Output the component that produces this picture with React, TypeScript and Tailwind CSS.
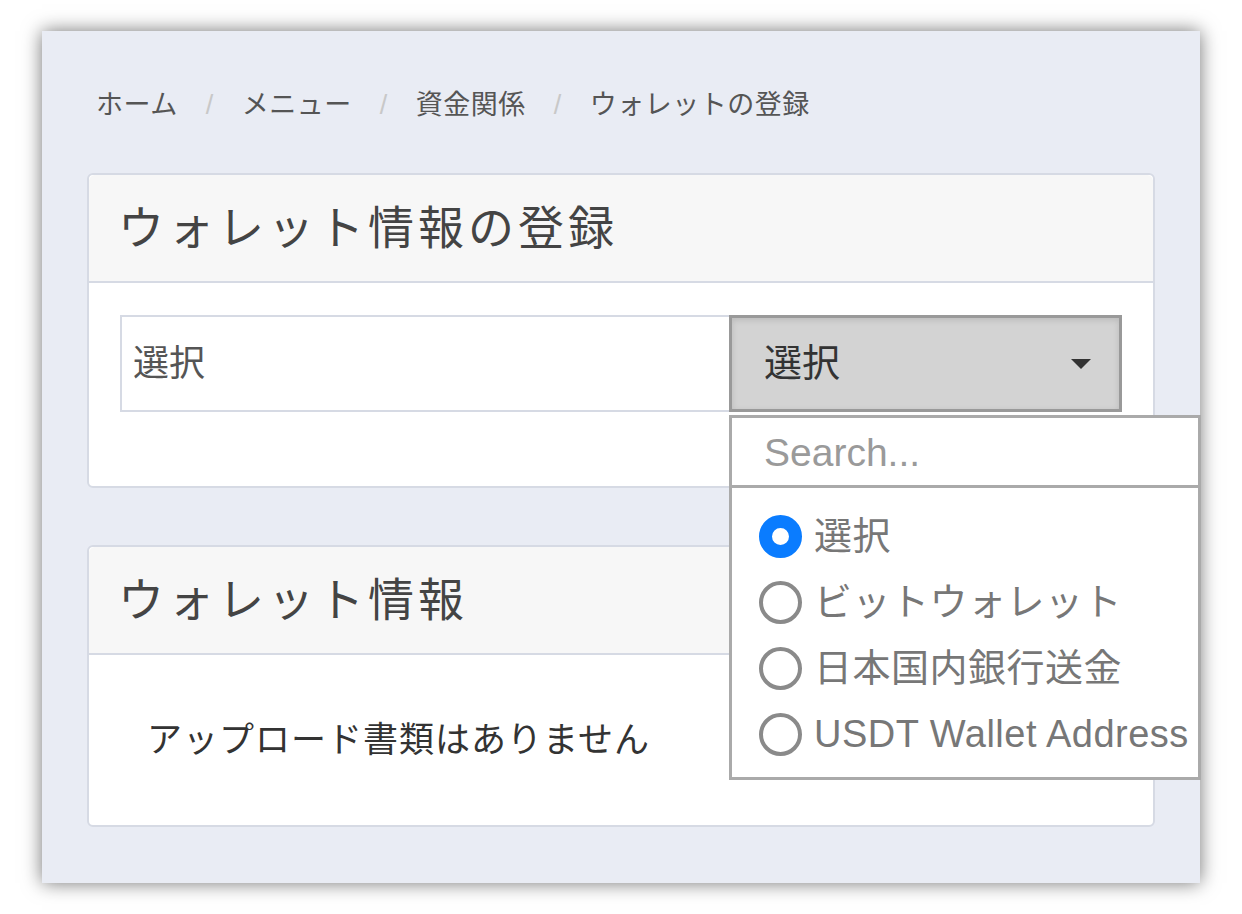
import React from 'react'

const jp = { fontFamily: '"Liberation Sans", "Noto Sans CJK JP", sans-serif' }

const crumbs = ['ホーム', 'メニュー', '資金関係', 'ウォレットの登録']

const options = [
  { label: '選択', checked: true },
  { label: 'ビットウォレット', checked: false },
  { label: '日本国内銀行送金', checked: false },
  { label: 'USDT Wallet Address', checked: false },
]

function Radio({ checked }: { checked: boolean }) {
  return checked ? (
    <span className="w-[43px] h-[43px] rounded-full border-[13px] border-[#0a7cff] bg-white shrink-0" />
  ) : (
    <span className="w-[43px] h-[43px] rounded-full border-[4px] border-[#8a8a8a] bg-white shrink-0" />
  )
}

function CardHeader({ title }: { title: string }) {
  return (
    <div className="h-[108px] flex items-center px-[29px] bg-[#f7f7f7] border-b-2 border-[#d6dae4] rounded-t-[6px]">
      <h2 className="text-[46px] leading-none text-[#444] tracking-[4px]">{title}</h2>
    </div>
  )
}

export default function App() {
  return (
    <div className="w-[1242px] h-[914px] bg-white pt-[31px] pl-[42px]" style={jp}>
      <div className="w-[1158px] h-[852px] bg-[#e9ecf4] shadow-[0_0_18px_rgba(0,0,0,0.55)] px-[45px] pt-[54px]">
        <nav className="flex items-center h-[40px] pl-[9px] text-[27px] tracking-[0.5px] text-[#555]">
          {crumbs.map((c, i) => (
            <React.Fragment key={c}>
              {i > 0 && <span className="text-[#c8c8c8] px-[28px]">/</span>}
              <span>{c}</span>
            </React.Fragment>
          ))}
        </nav>

        <div className="mt-[48px] bg-white border-2 border-[#d6dae4] rounded-[6px]">
          <CardHeader title="ウォレット情報の登録" />
          <div className="px-[31px] pt-[32px] pb-[74px]">
            <div className="flex h-[97px]">
              <div className="flex-1 flex items-center border-2 border-r-0 border-[#d6dae4] pl-[11px] text-[36px] text-[#555]">
                選択
              </div>
              <div className="relative w-[393px]">
                <div className="h-full flex items-center justify-between bg-[#d3d3d3] border-[3px] border-[#999] shadow-[inset_0_2px_6px_rgba(0,0,0,0.12)] pl-[32px] pr-[28px] text-[38px] text-[#333]">
                  <span>選択</span>
                  <span className="w-0 h-0 border-l-[10px] border-r-[10px] border-t-[10px] border-l-transparent border-r-transparent border-t-[#333]" />
                </div>
                <div className="absolute left-0 top-[100px] w-[472px] z-10 bg-white border-[3px] border-[#aaa]">
                  <div className="h-[70px] flex items-center pl-[32px] pt-[4px] border-b-[3px] border-[#aaa] text-[39px] text-[#9a9a9a]">
                    Search...
                  </div>
                  <ul className="pt-[15px] pb-[10px]">
                    {options.map((o) => (
                      <li key={o.label} className="h-[66px] flex items-center pl-[27px] gap-[12px] text-[38px] text-[#777]">
                        <Radio checked={o.checked} />
                        <span className="whitespace-nowrap tracking-[0.5px]">{o.label}</span>
                      </li>
                    ))}
                  </ul>
                </div>
              </div>
            </div>
          </div>
        </div>

        <div className="mt-[57px] bg-white border-2 border-[#d6dae4] rounded-[6px]">
          <CardHeader title="ウォレット情報" />
          <div className="h-[170px] flex items-center pl-[58px] text-[35px] tracking-[1px] text-[#333]">
            アップロード書類はありません
          </div>
        </div>
      </div>
    </div>
  )
}
